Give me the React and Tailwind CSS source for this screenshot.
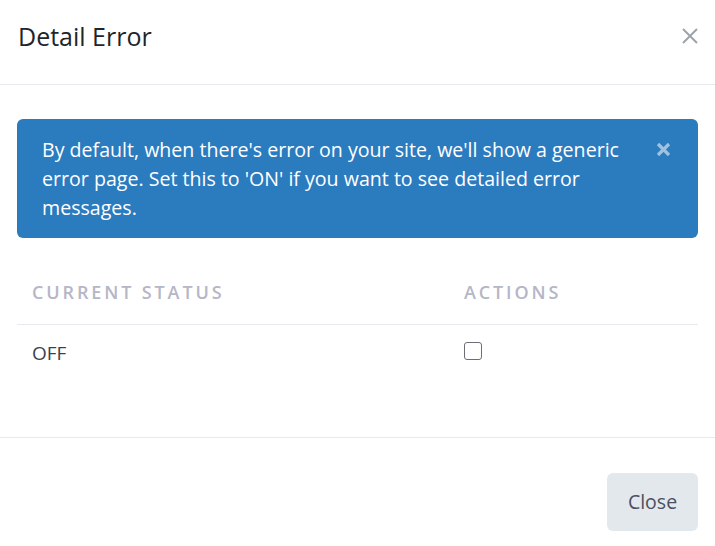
export default function App() {
  return (
    <div className="w-[715px] h-[546px] bg-white flex flex-col" style={{ fontFamily: '"Open Sans", sans-serif' }}>
      <div className="h-[85px] flex items-start justify-between pl-[18px] pr-[17px] pt-[20px] border-b border-[#e6e9ee]">
        <h1 className="text-[25px] leading-[32px] text-[#212529]">Detail Error</h1>
        <svg width="16" height="16" viewBox="0 0 16 16" className="mt-[8px]">
          <path d="M1 1L15 15M15 1L1 15" stroke="#9ea3ab" strokeWidth="2" />
        </svg>
      </div>
      <div className="flex-1 px-[17px] pt-[34px] border-b border-[#e6e9ee]">
        <div className="bg-[#2b7bbf] rounded-[6px] pl-[25px] pr-[27px] py-[16px] flex items-start justify-between">
          <p className="text-[19.6px] leading-[29px] text-white w-[592px]">
            By default, when there's error on your site, we'll show a generic error page. Set this to 'ON' if you want to see detailed error messages.
          </p>
          <svg width="15" height="15" viewBox="0 0 15 15" className="mt-[7px]">
            <path d="M2 2L13 13M13 2L2 13" stroke="#9dc2e3" strokeWidth="3.2" />
          </svg>
        </div>
        <div className="mt-[40px]">
          <div className="flex border-b border-[#e6e9ee] h-[47px] items-start">
            <div className="w-[447px] pl-[15px] text-[18px] leading-[28px] font-semibold tracking-[0.16em] text-[#b5b6c6]">CURRENT STATUS</div>
            <div className="text-[18px] leading-[28px] font-semibold tracking-[0.16em] text-[#b5b6c6]">ACTIONS</div>
          </div>
          <div className="flex items-start pt-[14px]">
            <div className="w-[447px] pl-[15px] text-[19px] leading-[28px] text-[#3a4250]">OFF</div>
            <div className="w-[18px] h-[18px] mt-[3px] border border-[#6b6f75] rounded-[3px] bg-white"></div>
          </div>
        </div>
      </div>
      <div className="h-[108px] flex items-start justify-end pr-[17px] pt-[35px]">
        <button className="w-[91px] h-[58px] rounded-[6px] bg-[#e3e8ed] text-[19.5px] text-[#4a5060]">Close</button>
      </div>
    </div>
  );
}
